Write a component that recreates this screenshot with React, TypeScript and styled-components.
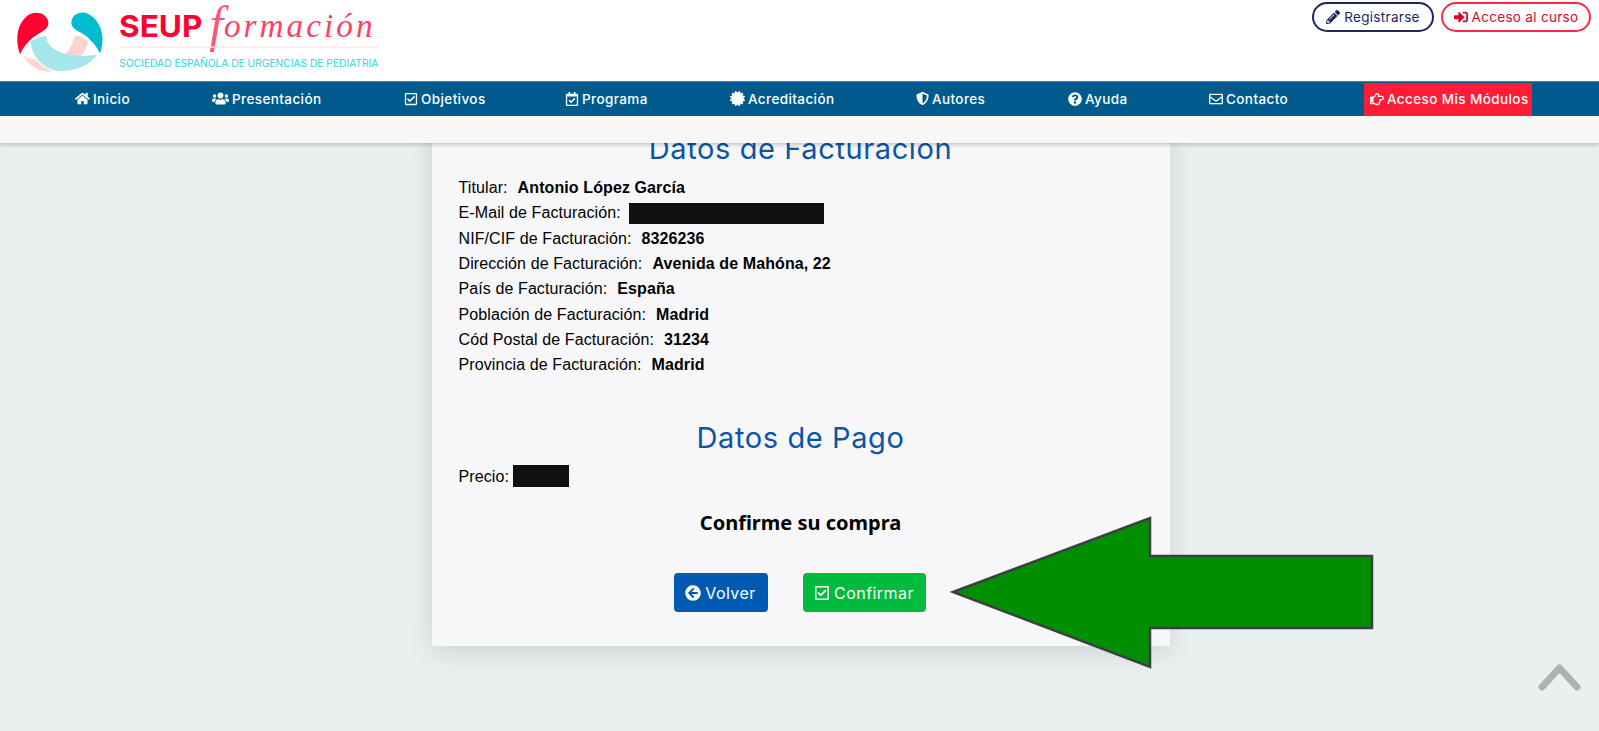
import React from "react";
import styled, { createGlobalStyle } from "styled-components";
import {
  FaHome, FaUsers, FaRegCheckSquare, FaRegCalendarCheck, FaCertificate, FaShieldAlt,
  FaQuestionCircle, FaRegEnvelope, FaRegHandPointRight, FaPencilAlt, FaSignInAlt, FaArrowCircleLeft,
} from "react-icons/fa";
import type { IconType } from "react-icons";

const Global = createGlobalStyle`
  html, body { margin: 0; padding: 0; background: #eaf0f0; }
  * { box-sizing: border-box; }
`;

const Page = styled.div`
  position: relative;
  height: 731px;
  overflow: hidden;
  background: #eaf0f0;
  font-family: "Inter", "Liberation Sans", sans-serif;
`;
const Top = styled.header`
  position: relative;
  z-index: 2;
  box-shadow: 0 2px 4px rgba(0,0,0,.2);
`;
const Brand = styled.div`
  height: 81px;
  background: #fff;
  display: flex;
  justify-content: space-between;
  align-items: flex-start;
  padding: 2px 8px 0 0;
`;
const Logo = styled.svg`
  width: 400px;
  height: 81px;
  margin-top: -2px;
  display: block;
`;
const Auth = styled.div`
  display: flex;
  gap: 7px;
`;
const Pill = styled.a<{ $c: string; $w: number; $t: string }>`
  display: inline-flex;
  align-items: center;
  justify-content: center;
  gap: 4px;
  height: 30px;
  width: ${p => p.$w}px;
  border: 2px solid ${p => p.$c};
  border-radius: 15px;
  color: ${p => p.$t};
  font-size: 13.5px;
  letter-spacing: .3px;
  svg { font-size: 14px; }
`;
const Nav = styled.nav`
  height: 35px;
  background: #005b8c;
  border-top: 1px solid #3f82b3;
  padding: 1px 0 0 35px;
  display: grid;
  grid-template-columns: 137px 192px 161px 165px 186px 152px 141px 155px 208px;
`;
const NavItem = styled.a<{ $hot?: boolean }>`
  display: flex;
  align-items: center;
  gap: 3px;
  padding: 0 0 2px ${p => (p.$hot ? 6 : 40)}px;
  margin-left: ${p => (p.$hot ? 40 : 0)}px;
  color: #fff;
  font-size: 13.5px;
  font-weight: 500;
  letter-spacing: .4px;
  background: ${p => (p.$hot ? "#ff1c37" : "transparent")};
  svg { flex: none; }
`;
const SubBar = styled.div`
  height: 27px;
  background: #f8f7f5;
`;
const Main = styled.main`
  display: flex;
  justify-content: center;
  padding-left: 2px;
  margin-top: -20px;
`;
const Card = styled.section`
  width: 738px;
  padding: 9px 27px 34px;
  background: #f7f7fa;
  box-shadow: 0 6px 24px rgba(0,0,0,.13);
`;
const Title = styled.h2<{ $mt?: number }>`
  margin: ${p => p.$mt ?? 0}px 0 9.4px;
  height: 34px;
  line-height: 34px;
  text-align: center;
  font-size: 29px;
  font-weight: 400;
  letter-spacing: .6px;
  color: #0a55a6;
`;
const Rows = styled.div`
  font-family: "Liberation Sans", Arial, sans-serif;
  font-size: 16px;
  letter-spacing: .1px;
  color: #000;
`;
const Row = styled.div`
  display: flex;
  align-items: center;
  height: 25.3px;
  white-space: nowrap;
`;
const Value = styled.b`
  margin-left: 10px;
`;
const Redacted = styled.span<{ $w: number; $l: number; $h: number; $up?: number }>`
  display: inline-block;
  width: ${p => p.$w}px;
  height: ${p => p.$h}px;
  margin-left: ${p => p.$l}px;
  margin-bottom: ${p => p.$up ?? 0}px;
  background: #111113;
`;
const Confirm = styled.h3`
  margin: 21px 0 37px;
  height: 26px;
  line-height: 26px;
  text-align: center;
  font-family: "Noto Sans", "Open Sans", sans-serif;
  font-size: 20px;
  font-weight: 700;
  color: #000;
`;
const Actions = styled.div`
  display: flex;
  justify-content: center;
  gap: 35px;
  padding-right: 2px;
`;
const Btn = styled.a<{ $bg: string; $w: number }>`
  display: flex;
  align-items: center;
  justify-content: center;
  gap: 4px;
  width: ${p => p.$w}px;
  height: 39px;
  border-radius: 4px;
  background: ${p => p.$bg};
  color: #fff;
  font-size: 16px;
  letter-spacing: .45px;
  svg { font-size: 16px; }
`;
const Arrow = styled.svg`
  position: absolute;
  left: 948px;
  top: 515px;
  width: 428px;
  height: 156px;
  z-index: 1;
`;
const ToTop = styled.svg`
  position: absolute;
  left: 1537px;
  top: 663px;
  width: 45px;
  height: 29px;
  z-index: 1;
`;

const navItems: [IconType, string, number][] = [
  [FaHome, "Inicio", 15],
  [FaUsers, "Presentación", 17],
  [FaRegCheckSquare, "Objetivos", 14],
  [FaRegCalendarCheck, "Programa", 14],
  [FaCertificate, "Acreditación", 15],
  [FaShieldAlt, "Autores", 13],
  [FaQuestionCircle, "Ayuda", 14],
  [FaRegEnvelope, "Contacto", 14],
];

const rows: [string, string][] = [
  ["NIF/CIF de Facturación:", "8326236"],
  ["Dirección de Facturación:", "Avenida de Mahóna, 22"],
  ["País de Facturación:", "España"],
  ["Población de Facturación:", "Madrid"],
  ["Cód Postal de Facturación:", "31234"],
  ["Provincia de Facturación:", "Madrid"],
];

export default function App() {
  return (
    <Page>
      <Global />
      <Top>
        <Brand>
          <Logo viewBox="0 0 1200 243">
            <path fill="#ffd4d0" d="M225 105C240 108 255 115 265 125C260 145 250 160 243 168C225 173 205 175 187 172C205 155 220 130 225 105Z" />
            <path fill="#ffd4d0" d="M70 165C78 172 95 180 105 178C120 195 140 208 160 215C120 218 85 200 70 165Z" />
            <path fill="#a5e7ea" d="M92 125C105 115 125 108 138 108C140 150 200 175 290 165C270 200 210 218 170 212C125 205 95 165 92 125Z" />
            <path fill="#ff0030" d="M60 163C45 120 50 70 85 45C110 30 140 40 145 65C148 90 120 95 100 112C80 128 68 145 60 163Z" />
            <path fill="#00bccf" d="M300 160C320 110 300 60 265 42C240 30 215 45 214 68C215 90 240 92 258 108C278 125 290 140 300 160Z" />
            <text x="357" y="110" fontFamily="Inter, sans-serif" fontWeight="700" fontSize="88" fill="#ff0033" textLength="250" lengthAdjust="spacingAndGlyphs">SEUP</text>
            <text x="628" y="110" fontFamily="'Liberation Serif', serif" fontStyle="italic" fontSize="100" fill="#ff4065">
              <tspan fontSize="150" dy="14" fill="#ff5577">f</tspan>
              <tspan dy="-14" dx="2" letterSpacing="9">ormación</tspan>
            </text>
            <rect x="358" y="139" width="775" height="4" fill="#fde3dd" />
            <text x="358" y="200" fontFamily="Inter, sans-serif" fontSize="30" fill="#2fd3e0" textLength="777" lengthAdjust="spacingAndGlyphs">SOCIEDAD ESPAÑOLA DE URGENCIAS DE PEDIATRIA</text>
          </Logo>
          <Auth>
            <Pill $c="#1d2660" $t="#1d2660" $w={122}><FaPencilAlt />Registrarse</Pill>
            <Pill $c="#fb2a45" $t="#d6082c" $w={150}><FaSignInAlt />Acceso al curso</Pill>
          </Auth>
        </Brand>
        <Nav>
          {navItems.map(([Icon, label, size]) => (
            <NavItem key={label}><Icon size={size} />{label}</NavItem>
          ))}
          <NavItem $hot><FaRegHandPointRight size={14} />Acceso Mis Módulos</NavItem>
        </Nav>
        <SubBar />
      </Top>
      <Main>
        <Card>
          <Title>Datos de Facturación</Title>
          <Rows>
            <Row>Titular:<Value>Antonio López García</Value></Row>
            <Row>E-Mail de Facturación:<Redacted $w={195} $l={8} $h={21} /></Row>
            {rows.map(([k, v]) => (
              <Row key={k}>{k}<Value>{v}</Value></Row>
            ))}
          </Rows>
          <Title $mt={43}>Datos de Pago</Title>
          <Rows>
            <Row>Precio:<Redacted $w={56} $l={4} $h={22} $up={2} /></Row>
          </Rows>
          <Confirm>Confirme su compra</Confirm>
          <Actions>
            <Btn $bg="#0059b3" $w={94}><FaArrowCircleLeft />Volver</Btn>
            <Btn $bg="#00bb3d" $w={123}><FaRegCheckSquare />Confirmar</Btn>
          </Actions>
        </Card>
      </Main>
      <Arrow viewBox="948 515 428 156">
        <path d="M953 592L1150 518V556H1372V628H1150V667Z" fill="#008f00" stroke="#3a4040" strokeWidth="2.5" />
      </Arrow>
      <ToTop viewBox="0 0 45 29">
        <path d="M5 24L22.5 5L40 24" fill="none" stroke="#adb2b2" strokeWidth="7" strokeLinecap="round" strokeLinejoin="round" />
      </ToTop>
    </Page>
  );
}
